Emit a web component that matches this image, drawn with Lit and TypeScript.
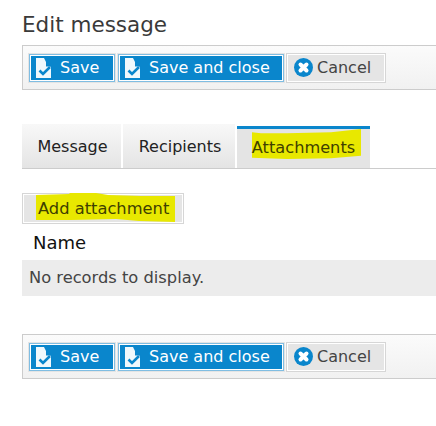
import { LitElement, html, css, svg } from "lit";
import { customElement } from "lit/decorators.js";

const saveIcon = svg`<svg class="ico" width="16" height="20" viewBox="0 0 16 20">
  <path d="M0 0H8L10 4L15 9V20H0Z" fill="#fff" opacity=".94"/>
  <path d="M10 3L16 8.5H10Z" fill="#0a86cc"/>
  <path d="M3.5 12.5L7 16L14 9" fill="none" stroke="#0a86cc" stroke-width="2.6"/>
</svg>`;

const cancelIcon = svg`<svg class="ico" width="19" height="19" viewBox="0 0 19 19">
  <circle cx="9.5" cy="9.5" r="9.5" fill="#0a86cc"/>
  <path d="M6.5 6.5L12.5 12.5M12.5 6.5L6.5 12.5" stroke="#fff" stroke-width="4" stroke-linecap="round"/>
</svg>`;

@customElement("app-root")
export class AppRoot extends LitElement {
  static styles = css`
    :host {
      display: block;
      width: 436px;
      height: 426px;
      overflow: hidden;
      background: #fff;
      font-family: "DejaVu Sans", Verdana, sans-serif;
      font-size: 16px;
      color: #444;
    }
    .page {
      display: flex;
      flex-direction: column;
      padding: 13px 0 0 22px;
    }
    h1 {
      margin: 0;
      font-size: 21.5px;
      font-weight: 400;
      line-height: 24px;
      color: #3a3a3a;
    }
    .toolbar {
      display: flex;
      align-items: center;
      gap: 1px;
      box-sizing: border-box;
      height: 45px;
      margin-top: 8px;
      padding: 0 0 0 5px;
      background: linear-gradient(#fbfbfb, #f1f1f1);
      border: 1px solid #ccc;
      border-right: none;
    }
    .toolbar.bottom {
      margin-top: 38px;
    }
    .primary {
      display: flex;
      align-items: center;
      box-sizing: border-box;
      height: 30px;
      background: #0a86cc;
      color: #fff;
      border: 1px solid #e4e4e4;
      box-shadow: inset 0 0 0 1px #7fbde2, inset 0 0 0 2px #fff;
      font-size: 16px;
    }
    .primary .ico {
      margin-left: 7px;
    }
    .primary span {
      margin-left: 8px;
      white-space: nowrap;
    }
    .save {
      width: 88px;
    }
    .saveclose {
      width: 168px;
    }
    .cancel {
      display: flex;
      align-items: center;
      box-sizing: border-box;
      width: 100px;
      height: 30px;
      background: #e5e5e5;
      border: 1px solid #d6d6d6;
      box-shadow: inset 0 0 0 1px #fff;
      padding-left: 7px;
    }
    .cancel span {
      margin-left: 4px;
    }
    .tabs {
      display: flex;
      height: 45px;
      margin-top: 34px;
      border-bottom: 1px solid #ccc;
      box-sizing: border-box;
      gap: 2px;
    }
    .tab {
      display: flex;
      align-items: center;
      justify-content: center;
      box-sizing: border-box;
      height: 44px;
      background: linear-gradient(#f8f8f8, #e4e4e4);
      color: #222;
      white-space: nowrap;
    }
    .tab.m { width: 99px; padding-left: 2px; }
    .tab.r { width: 112px; padding-left: 2px; }
    .tab.a {
      width: 133px;
      background: #e4e4e4;
      border-top: 3px solid #0a86cc;
      margin-top: 2px;
      height: 42px;
      padding: 0 0 3px 0;
      position: relative;
      color: #3f3f00;
      font-size: 16.2px;
    }
    .hl {
      position: absolute;
      pointer-events: none;
    }
    .hl-tab { left: 15px; top: 0; }
    .label {
      position: relative;
    }
    .add {
      position: relative;
      display: flex;
      align-items: center;
      box-sizing: border-box;
      width: 162px;
      height: 31px;
      margin-top: 24px;
      padding-left: 15px;
      background: #e5e5e5;
      border: 1px solid #d6d6d6;
      box-shadow: inset 0 0 0 1px #fff;
      color: #3f3f00;
      font-size: 16.3px;
      white-space: nowrap;
    }
    .hl-add { left: 13px; top: -1px; }
    .name {
      margin: 5px 0 3px 11px;
      line-height: 28px;
      font-size: 18px;
      color: #111;
    }
    .empty {
      box-sizing: border-box;
      height: 36px;
      padding: 0 0 2px 7px;
      display: flex;
      align-items: center;
      background: #ececec;
      color: #444;
      font-size: 16.3px;
    }
  `;

  private toolbar(cls = "") {
    return html`<div class="toolbar ${cls}">
      <div class="primary save">${saveIcon}<span>Save</span></div>
      <div class="primary saveclose">${saveIcon}<span>Save and close</span></div>
      <div class="cancel">${cancelIcon}<span>Cancel</span></div>
    </div>`;
  }

  render() {
    return html`<div class="page">
      <h1>Edit message</h1>
      ${this.toolbar()}
      <div class="tabs">
        <div class="tab m">Message</div>
        <div class="tab r">Recipients</div>
        <div class="tab a">
          <svg class="hl hl-tab" width="110" height="31" viewBox="0 0 110 31">
            <path d="M0 3.3L9 4.3L35 4.3L79 3.3L109 0L109 26.7L79 29.3L35 30L0 28.7Z" fill="#e8e800"/>
          </svg>
          <span class="label">Attachments</span>
        </div>
      </div>
      <div class="add">
        <svg class="hl hl-add" width="140" height="30" viewBox="0 0 140 30">
          <path d="M0 2L33 1L34 0L60 0L72 2L105 3L139 3L139 29L103 28L80 26L35 27L0 27Z" fill="#e8e800"/>
        </svg>
        <span class="label">Add attachment</span>
      </div>
      <div class="name">Name</div>
      <div class="empty">No records to display.</div>
      ${this.toolbar("bottom")}
    </div>`;
  }
}
